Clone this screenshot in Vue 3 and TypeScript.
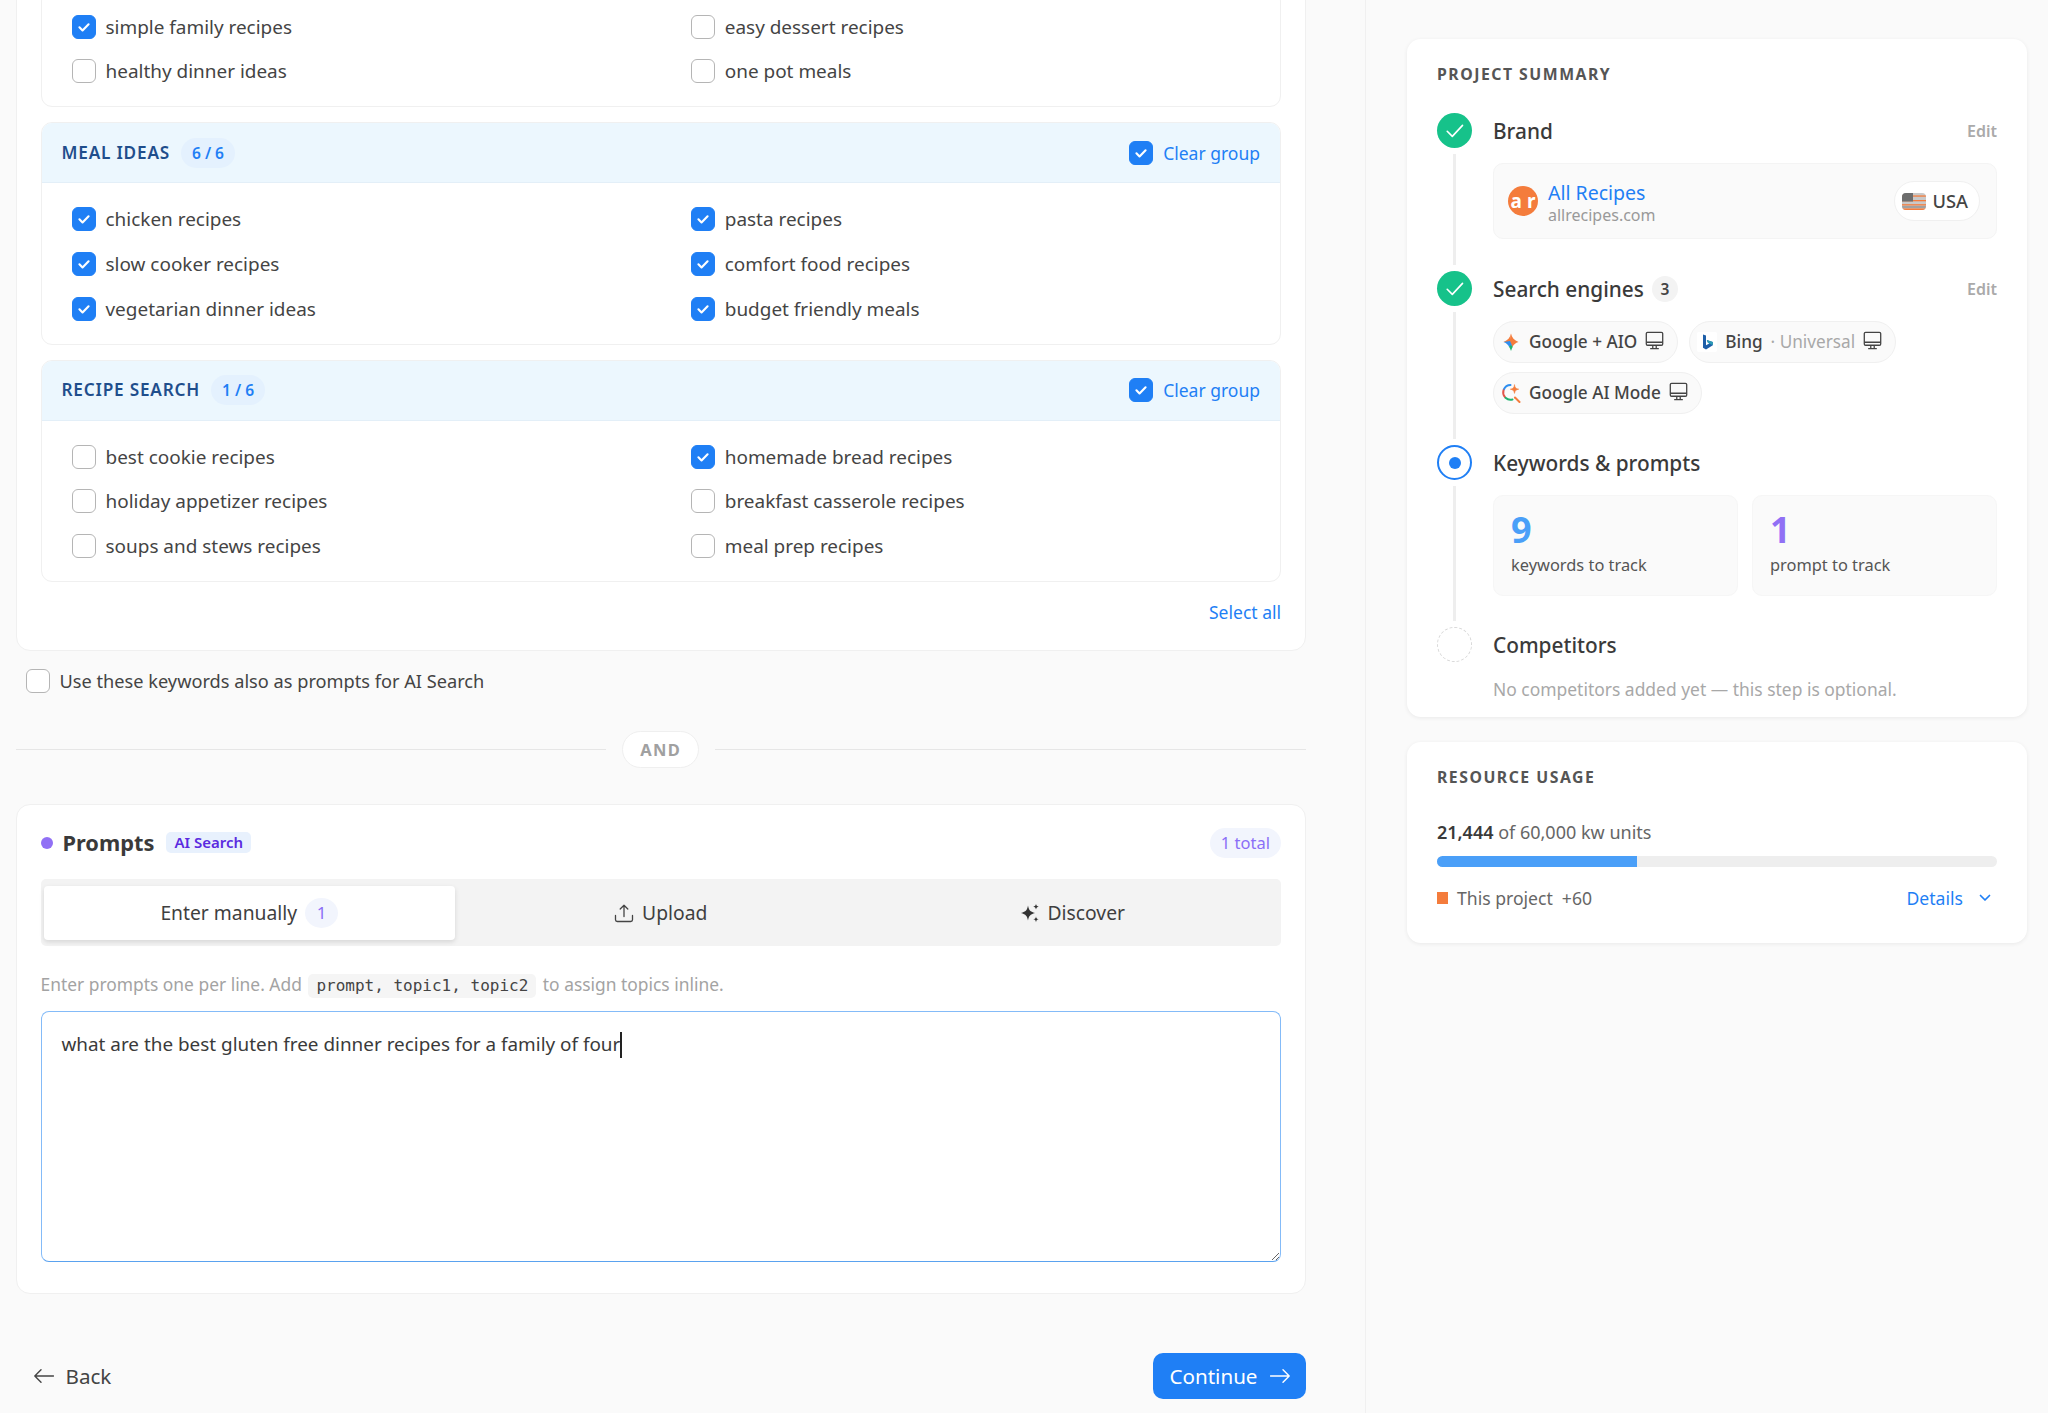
<script setup lang="ts">
interface Keyword {
  label: string
  checked: boolean
}

interface KeywordGroup {
  name: string
  count: string
  items: Keyword[]
}

function kw(label: string, checked = false): Keyword {
  return { label, checked }
}

const topItems: Keyword[] = [
  kw('simple family recipes', true),
  kw('easy dessert recipes'),
  kw('healthy dinner ideas'),
  kw('one pot meals'),
]

const groups: KeywordGroup[] = [
  {
    name: 'MEAL IDEAS',
    count: '6 / 6',
    items: [
      kw('chicken recipes', true),
      kw('pasta recipes', true),
      kw('slow cooker recipes', true),
      kw('comfort food recipes', true),
      kw('vegetarian dinner ideas', true),
      kw('budget friendly meals', true),
    ],
  },
  {
    name: 'RECIPE SEARCH',
    count: '1 / 6',
    items: [
      kw('best cookie recipes'),
      kw('homemade bread recipes', true),
      kw('holiday appetizer recipes'),
      kw('breakfast casserole recipes'),
      kw('soups and stews recipes'),
      kw('meal prep recipes'),
    ],
  },
]

const usedUnits = 21444
const totalUnits = 60000
const usedPercent = (usedUnits / totalUnits) * 100
</script>

<template>
  <div class="app">
    <main class="main">
      <section class="card keywords">
        <div class="group">
          <div class="group-body">
            <label v-for="item in topItems" :key="item.label" class="row">
              <span class="box" :class="{ on: item.checked }">
                <svg v-if="item.checked" viewBox="0 0 24 24"><path d="M7 12.4l3.4 3.4L17 9" /></svg>
              </span>
              <span>{{ item.label }}</span>
            </label>
          </div>
        </div>

        <div v-for="group in groups" :key="group.name" class="group">
          <div class="group-head">
            <span class="group-name">{{ group.name }}</span>
            <span class="group-count">{{ group.count }}</span>
            <span class="group-action">
              <span class="box on"><svg viewBox="0 0 24 24"><path d="M7 12.4l3.4 3.4L17 9" /></svg></span>
              <span>Clear group</span>
            </span>
          </div>
          <div class="group-body">
            <label v-for="item in group.items" :key="item.label" class="row">
              <span class="box" :class="{ on: item.checked }">
                <svg v-if="item.checked" viewBox="0 0 24 24"><path d="M7 12.4l3.4 3.4L17 9" /></svg>
              </span>
              <span>{{ item.label }}</span>
            </label>
          </div>
        </div>

        <div class="select-all">Select all</div>
      </section>

      <label class="row also">
        <span class="box"></span>
        <span>Use these keywords also as prompts for AI Search</span>
      </label>

      <div class="divider">
        <span class="divider-line"></span>
        <span class="divider-pill">AND</span>
        <span class="divider-line"></span>
      </div>

      <section class="card prompts">
        <div class="prompts-head">
          <span class="dot"></span>
          <span class="prompts-title">Prompts</span>
          <span class="ai-badge">AI Search</span>
          <span class="total">1 total</span>
        </div>

        <div class="tabs">
          <div class="tab active">
            <span>Enter manually</span>
            <span class="tab-count">1</span>
          </div>
          <div class="tab">
            <svg class="tab-icon" viewBox="0 0 20 20" fill="none" stroke="#444" stroke-width="1.3" stroke-linecap="round" stroke-linejoin="round">
              <path d="M10 13.5V2.2M6.2 6L10 2.2 13.8 6" />
              <path d="M1.5 12.5v4.2c0 1 .8 1.8 1.8 1.8h13.4c1 0 1.8-.8 1.8-1.8v-4.2" />
            </svg>
            <span>Upload</span>
          </div>
          <div class="tab">
            <svg class="tab-icon" viewBox="0 0 20 20" fill="#333">
              <path d="M8 2.500C8.800 7 10 8.500 15 10 10 11.500 8.800 13 8 17.500 7.200 13 6 11.500 1 10 6 8.500 7.200 7 8 2.500z" />
              <path d="M16 .8c.3 1.900 1 2.600 2.800 2.900-1.800.3-2.500 1-2.800 2.900-.3-1.900-1-2.600-2.800-2.900 1.800-.3 2.500-1 2.800-2.900z" />
              <path d="M16 13.400c.3 1.900 1 2.600 2.800 2.900-1.800.3-2.500 1-2.800 2.900-.3-1.900-1-2.600-2.800-2.900 1.800-.3 2.500-1 2.800-2.900z" />
            </svg>
            <span>Discover</span>
          </div>
        </div>

        <p class="hint">Enter prompts one per line. Add <code>prompt, topic1, topic2</code> to assign topics inline.</p>

        <div class="editor">what are the best gluten free dinner recipes for a family of four<span class="caret"></span></div>
      </section>

      <footer class="footer">
        <span class="back">
          <svg viewBox="0 0 20 20" fill="none" stroke="#444" stroke-width="1.4" stroke-linecap="round" stroke-linejoin="round">
            <path d="M19.500 10H.8M7 3.800L.8 10 7 16.200" />
          </svg>
          Back
        </span>
        <button class="continue">
          Continue
          <svg viewBox="0 0 20 20" fill="none" stroke="#fff" stroke-width="1.4" stroke-linecap="round" stroke-linejoin="round">
            <path d="M.5 10h18.700M13 3.800l6.200 6.200-6.200 6.200" />
          </svg>
        </button>
      </footer>
    </main>

    <aside class="side">
      <section class="panel summary">
        <h3 class="panel-title">PROJECT SUMMARY</h3>

        <div class="step brand-step">
          <div class="rail">
            <span class="node done">
              <svg viewBox="0 0 24 24"><path d="M7 12.500l3.500 3.500L17.500 8.500" /></svg>
            </span>
            <span class="rail-line"></span>
          </div>
          <div class="step-body">
            <div class="step-head">
              <span class="step-title">Brand</span>
              <span class="edit">Edit</span>
            </div>
            <div class="brand-box">
              <span class="brand-logo">a r</span>
              <div class="brand-text">
                <div class="brand-name">All Recipes</div>
                <div class="brand-url">allrecipes.com</div>
              </div>
              <span class="country">
                <svg class="flag" viewBox="0 0 24 17">
                  <defs>
                    <clipPath id="flag-clip"><rect width="24" height="17" rx="4" /></clipPath>
                  </defs>
                  <g clip-path="url(#flag-clip)">
                    <rect width="24" height="17" fill="#c9c9c9" />
                    <rect y="2.400" width="24" height="1.300" fill="#f47c3c" />
                    <rect y="7" width="24" height="1.300" fill="#f47c3c" />
                    <rect y="11.200" width="24" height="1.300" fill="#f47c3c" />
                    <rect y="15.400" width="24" height="1.600" fill="#f47c3c" />
                    <rect y="13.600" width="24" height=".8" fill="#666" />
                    <rect width="11" height="8.500" fill="#6d6d6d" />
                  </g>
                </svg>
                USA
              </span>
            </div>
          </div>
        </div>

        <div class="step engines-step">
          <div class="rail">
            <span class="node done">
              <svg viewBox="0 0 24 24"><path d="M7 12.500l3.500 3.500L17.500 8.500" /></svg>
            </span>
            <span class="rail-line"></span>
          </div>
          <div class="step-body">
            <div class="step-head">
              <span class="step-title">Search engines</span>
              <span class="step-count">3</span>
              <span class="edit">Edit</span>
            </div>
            <div class="chips">
              <span class="chip">
                <svg class="engine" viewBox="0 0 20 20">
                  <path d="M10 1.500c.7 4 3.400 7 7.500 8.500-3 .9-5 2.600-6 5L8.500 10z" fill="#f47c3c" />
                  <path d="M10 1.500C9.300 5.500 6.600 8.500 2.500 10L9 10.500z" fill="#f47c3c" />
                  <path d="M2.500 10c2.600.9 4.600 2.700 5.600 5L11 13.500 9 9z" fill="#2f8ff0" />
                  <path d="M8 14.800c.9 1.100 1.500 2.500 2 4.200.5-1.700 1.100-3.100 1.800-4.200L10 13z" fill="#1fb36f" />
                </svg>
                <span>Google + AIO</span>
                <svg class="device" viewBox="0 0 22 22" fill="none" stroke="#444" stroke-width="1.500">
                  <rect x="1.500" y="1.500" width="19" height="15" rx="1.500" />
                  <path d="M1.500 13h19M9 16.500v3.500M13 16.500v3.500M6 20.500h10" />
                </svg>
              </span>
              <span class="chip">
                <svg class="engine bing" viewBox="0 0 20 20">
                  <rect width="20" height="20" rx="2" fill="#fff" />
                  <path d="M6 2.500l3 1v9.800l3.300-1.900-1.500-.8-1-2.600 6 2v3.300L9 17.500l-3-1.700z" fill="#1d5ea8" />
                  <path d="M9.800 8l6 2v3.300l-3.500-1.900-1.500-.8z" fill="#2b9bb5" />
                </svg>
                <span>Bing</span>
                <span class="muted">· Universal</span>
                <svg class="device" viewBox="0 0 22 22" fill="none" stroke="#444" stroke-width="1.500">
                  <rect x="1.500" y="1.500" width="19" height="15" rx="1.500" />
                  <path d="M1.500 13h19M9 16.500v3.500M13 16.500v3.500M6 20.500h10" />
                </svg>
              </span>
              <span class="chip">
                <svg class="engine mode" viewBox="0 0 20 20" fill="none" stroke-width="2" stroke-linecap="round">
                  <path d="M9.500 2a7.500 7.500 0 0 0-6.700 4.500" stroke="#2f8ff0" />
                  <path d="M2.500 7.200a7.500 7.500 0 0 0 1.500 7" stroke="#e2554a" />
                  <path d="M4.500 14.800a7.500 7.500 0 0 0 7 1.700" stroke="#1fb36f" />
                  <path d="M14 14.500l4.500 4.500" stroke="#f47c3c" />
                  <path d="M13.500 2c.4 2.700 1.400 3.700 4.200 4.200-2.800.5-3.800 1.500-4.200 4.200-.4-2.700-1.400-3.700-4.200-4.200 2.800-.5 3.800-1.500 4.200-4.200z" fill="#f47c3c" stroke="#f47c3c" stroke-width=".6" />
                </svg>
                <span>Google AI Mode</span>
                <svg class="device" viewBox="0 0 22 22" fill="none" stroke="#444" stroke-width="1.500">
                  <rect x="1.500" y="1.500" width="19" height="15" rx="1.500" />
                  <path d="M1.500 13h19M9 16.500v3.500M13 16.500v3.500M6 20.500h10" />
                </svg>
              </span>
            </div>
          </div>
        </div>

        <div class="step keywords-step">
          <div class="rail">
            <span class="node current"><span class="node-dot"></span></span>
            <span class="rail-line"></span>
          </div>
          <div class="step-body">
            <div class="step-head">
              <span class="step-title">Keywords &amp; prompts</span>
            </div>
            <div class="stats">
              <div class="stat">
                <div class="stat-num blue">9</div>
                <div class="stat-label">keywords to track</div>
              </div>
              <div class="stat">
                <div class="stat-num purple">1</div>
                <div class="stat-label">prompt to track</div>
              </div>
            </div>
          </div>
        </div>

        <div class="step last-step">
          <div class="rail">
            <span class="node pending"></span>
          </div>
          <div class="step-body">
            <div class="step-head">
              <span class="step-title">Competitors</span>
            </div>
            <p class="step-note">No competitors added yet — this step is optional.</p>
          </div>
        </div>
      </section>

      <section class="panel usage">
        <h3 class="panel-title">RESOURCE USAGE</h3>
        <div class="usage-text"><strong>21,444</strong> of 60,000 kw units</div>
        <div class="bar">
          <div class="bar-fill" :style="{ width: usedPercent + '%' }"></div>
        </div>
        <div class="usage-foot">
          <span class="legend-mark"></span>
          <span class="legend-label">This project</span>
          <span class="legend-value">+60</span>
          <span class="details">
            Details
            <svg viewBox="0 0 12 8" fill="none" stroke="#1f7ff5" stroke-width="1.700" stroke-linecap="round" stroke-linejoin="round">
              <path d="M1.500 1.500L6 6l4.500-4.500" />
            </svg>
          </span>
        </div>
      </section>
    </aside>
  </div>
</template>

<style>
html,
body {
  background: #fafafa;
  overflow: hidden;
}
</style>

<style scoped>
.app {
  display: flex;
  height: 100vh;
  overflow: hidden;
  background: #fafafa;
  color: #444;
  font-family: 'Noto Sans', sans-serif;
  font-size: 18.95px;
  line-height: 24px;
}

.main {
  box-sizing: border-box;
  width: 1366px;
  flex: none;
  padding: 0 59px 0 15.5px;
  border-right: 1px solid #f0f0f0;
}

.card {
  background: #fff;
  border: 1px solid #f0f0f0;
  border-radius: 14px;
}

.keywords {
  margin-top: -26.3px;
  padding: 0 24px;
}

.group {
  margin-top: 15px;
  border: 1px solid #f0f0f0;
  border-radius: 11px;
  overflow: hidden;
}

.group-head {
  box-sizing: border-box;
  display: flex;
  align-items: center;
  height: 60px;
  padding: 0 20px;
  background: #ecf7fe;
  border-bottom: 1px solid #e3eff8;
}

.group-name {
  font-size: 17.200px;
  font-weight: 600;
  letter-spacing: 0.8px;
  color: #1f4e8c;
}

.group-count {
  margin-left: 11px;
  padding: 3px 11px;
  border-radius: 15px;
  background: #e4f1fe;
  color: #1f7ff5;
  font-size: 15.500px;
  font-weight: 600;
}

.group-action {
  margin-left: auto;
  display: flex;
  align-items: center;
  gap: 10px;
  color: #1f7ff5;
  font-size: 17.500px;
}

.group-body {
  display: grid;
  grid-template-columns: 1fr 1fr;
  column-gap: 60px;
  row-gap: 20.700px;
  padding: 24px 30px 23px;
}

.row {
  display: flex;
  align-items: center;
  gap: 10px;
}

.box {
  box-sizing: border-box;
  flex: none;
  width: 24px;
  height: 24px;
  border: 1.300px solid #b5b5b5;
  border-radius: 6px;
  background: #fff;
}

.box.on {
  background: #1f7ff5;
  border-color: #1f7ff5;
}

.box svg {
  display: block;
  width: 22px;
  height: 22px;
  fill: none;
  stroke: #fff;
  stroke-width: 2.300;
  stroke-linecap: round;
  stroke-linejoin: round;
}

.select-all {
  margin-top: 18px;
  padding-bottom: 25.500px;
  text-align: right;
  color: #1f7ff5;
  font-size: 17.500px;
}

.also {
  margin: 18.500px 0 0 10px;
  font-size: 18.200px;
}

.divider {
  display: flex;
  align-items: center;
  gap: 16px;
  margin-top: 37.500px;
}

.divider-line {
  flex: 1;
  height: 1px;
  background: #e6e6e6;
}

.divider-pill {
  box-sizing: border-box;
  height: 37px;
  padding: 0 17px;
  border: 1px solid #efefef;
  border-radius: 19px;
  background: #fff;
  color: #a0a0a0;
  font-size: 16.500px;
  font-weight: 700;
  letter-spacing: 1.300px;
  line-height: 35px;
}

.prompts {
  margin-top: 36px;
  padding: 0 24px 31px;
}

.prompts-head {
  display: flex;
  align-items: center;
  height: 30px;
  margin-top: 23px;
}

.dot {
  width: 12px;
  height: 12px;
  border-radius: 50%;
  background: #9170f5;
}

.prompts-title {
  margin-left: 10px;
  font-size: 21.800px;
  font-weight: 700;
  color: #3a3a3a;
}

.ai-badge {
  margin-left: 12px;
  padding: 0 8px;
  height: 21px;
  border-radius: 5px;
  background: #e8f1fd;
  color: #5b2be0;
  font-size: 15px;
  font-weight: 600;
  line-height: 21px;
}

.total {
  margin-left: auto;
  padding: 0 11px;
  height: 30px;
  border-radius: 15px;
  background: #f2f5fd;
  color: #8b6ff7;
  font-size: 16.500px;
  line-height: 30px;
}

.tabs {
  display: grid;
  grid-template-columns: repeat(3, 1fr);
  margin-top: 21px;
  padding: 7px 3px 6px;
  background: #f3f3f3;
  border-radius: 5px;
}

.tab {
  display: flex;
  align-items: center;
  justify-content: center;
  gap: 8px;
  height: 54px;
  color: #3f3f3f;
  font-size: 19.300px;
}

.tab.active {
  background: #fff;
  border-radius: 4px;
  box-shadow: 0 2px 5px rgba(0, 0, 0, 0.12);
}

.tab-count {
  width: 33px;
  height: 30px;
  border-radius: 50%;
  background: #f2f5fd;
  color: #8b6ff7;
  font-size: 17px;
  line-height: 30px;
  text-align: center;
}

.tab-icon {
  width: 20px;
  height: 20px;
  flex: none;
}

.hint {
  height: 24px;
  margin: 26px 0 0;
  color: #a3a3a3;
  font-size: 17.400px;
}

code {
  display: inline-block;
  margin: 0 2px;
  padding: 0 8px;
  border-radius: 5px;
  background: #f5f5f5;
  color: #444;
  font-family: 'DejaVu Sans Mono', monospace;
  font-size: 16px;
  line-height: 24px;
}

.editor {
  box-sizing: border-box;
  height: 251px;
  margin-top: 15px;
  padding: 20.500px 20px;
  border: 1.300px solid #84bbf8;
  border-bottom-color: #5aa2ef;
  border-radius: 8px;
  overflow: auto;
  resize: vertical;
  color: #3a3a3a;
  background: #fff;
  font-size: 18.900px;
}

.caret {
  display: inline-block;
  width: 1.500px;
  height: 26px;
  background: #222;
  vertical-align: -7px;
}

.footer {
  display: flex;
  align-items: center;
  justify-content: space-between;
  margin-top: 59px;
}

.back {
  display: flex;
  align-items: center;
  gap: 12px;
  padding-left: 18px;
  font-size: 20.600px;
}

.back svg,
.continue svg {
  width: 20px;
  height: 20px;
}

.continue {
  display: flex;
  align-items: center;
  gap: 12px;
  box-sizing: border-box;
  height: 46px;
  padding: 0 16.500px;
  border: none;
  border-radius: 10px;
  background: #1f7ff5;
  color: #fff;
  font-family: inherit;
  font-size: 20.600px;
}

.side {
  flex: 1;
  padding: 39px 21px 0 41px;
  min-width: 0;
}

.panel {
  background: #fff;
  border-radius: 14px;
  padding: 0 30px;
  box-shadow: 0 1px 4px rgba(0, 0, 0, 0.07);
}

.panel-title {
  margin: 0;
  font-size: 15.800px;
  font-weight: 700;
  letter-spacing: 1.500px;
  color: #555;
  line-height: 24px;
}

.summary {
  box-sizing: border-box;
  height: 678px;
  padding-top: 23px;
}

.step {
  display: flex;
  gap: 21px;
}

.brand-step {
  height: 158px;
  margin-top: 27px;
}

.engines-step {
  height: 174px;
}

.keywords-step {
  height: 182px;
}

.rail {
  display: flex;
  flex-direction: column;
  align-items: center;
  flex: none;
  width: 35px;
}

.node {
  box-sizing: border-box;
  flex: none;
  width: 35px;
  height: 35px;
  border-radius: 50%;
}

.node.done {
  background: #16c28a;
}

.node.done svg {
  display: block;
  width: 35px;
  height: 35px;
  fill: none;
  stroke: #fff;
  stroke-width: 1.100;
  stroke-linecap: round;
  stroke-linejoin: round;
}

.node.current {
  display: flex;
  align-items: center;
  justify-content: center;
  border: 2.400px solid #1f7ff5;
}

.node-dot {
  width: 12px;
  height: 12px;
  border-radius: 50%;
  background: #1f7ff5;
}

.node.pending {
  border: 1.800px dashed #d8d8d8;
}

.rail-line {
  flex: 1;
  width: 3px;
  margin: 6px 0;
  background: #eeeeee;
}

.step-body {
  flex: 1;
  min-width: 0;
}

.step-head {
  display: flex;
  align-items: center;
  height: 35px;
}

.step-title {
  font-size: 20.800px;
  font-weight: 500;
  color: #3a3a3a;
}

.step-count {
  margin-left: 8px;
  width: 26px;
  height: 26px;
  border-radius: 50%;
  background: #f3f3f3;
  text-align: center;
  font-size: 15.500px;
  font-weight: 600;
  line-height: 26px;
}

.edit {
  margin-left: auto;
  color: #aaa;
  font-size: 16px;
  font-weight: 600;
}

.brand-box {
  display: flex;
  align-items: center;
  box-sizing: border-box;
  height: 76px;
  margin-top: 15px;
  padding: 0 16px 0 14px;
  border: 1px solid #f4f4f4;
  border-radius: 10px;
  background: #fafafa;
}

.brand-logo {
  flex: none;
  width: 30px;
  height: 30px;
  border-radius: 50%;
  background: #f47c3c;
  color: #fff;
  font-size: 19px;
  font-weight: 700;
  line-height: 30px;
  text-align: center;
  white-space: pre;
  overflow: hidden;
}

.brand-text {
  margin-left: 10px;
  padding-top: 5px;
}

.brand-name {
  color: #1f7ff5;
  font-size: 19.500px;
  line-height: 23px;
}

.brand-url {
  color: #999;
  font-size: 16px;
  line-height: 22px;
}

.country {
  display: flex;
  align-items: center;
  gap: 6.500px;
  box-sizing: border-box;
  height: 40px;
  margin-left: auto;
  padding: 0 11px 0 7px;
  border: 1px solid #f0f0f0;
  border-radius: 20px;
  background: #fff;
  font-size: 18.300px;
  font-weight: 500;
}

.flag {
  width: 24px;
  height: 17px;
}

.chips {
  display: flex;
  flex-wrap: wrap;
  gap: 9px 11px;
  margin-top: 14.500px;
}

.chip {
  display: flex;
  align-items: center;
  gap: 8px;
  box-sizing: border-box;
  height: 42px;
  padding: 0 13px 0 7px;
  border: 1px solid #f0f0f0;
  border-radius: 21px;
  background: #fafafa;
  font-size: 17.200px;
  font-weight: 500;
}

.muted {
  color: #a8a8a8;
  font-weight: 400;
}

.engine {
  flex: none;
  width: 20px;
  height: 20px;
}

.device {
  flex: none;
  width: 19px;
  height: 19px;
  margin-top: -2px;
}

.stats {
  display: grid;
  grid-template-columns: 1fr 1fr;
  gap: 14px;
  margin-top: 15px;
}

.stat {
  box-sizing: border-box;
  height: 101px;
  padding: 15px 17px 0;
  border: 1px solid #f6f6f6;
  border-radius: 10px;
  background: #fafafa;
}

.stat-num {
  font-size: 36px;
  font-weight: 700;
  line-height: 38px;
}

.stat-num.blue {
  color: #4a9ff8;
}

.stat-num.purple {
  color: #9170f5;
}

.stat-label {
  margin-top: 4px;
  font-size: 16.400px;
  color: #555;
}

.step-note {
  margin: 15px 0 0;
  color: #a8a8a8;
  font-size: 17.450px;
}

.usage {
  box-sizing: border-box;
  height: 201px;
  margin-top: 25px;
  padding-top: 23px;
}

.usage-text {
  margin-top: 31px;
  font-size: 18px;
  color: #666;
}

.usage-text strong {
  font-weight: 600;
  color: #3a3a3a;
}

.bar {
  height: 11px;
  margin-top: 12px;
  border-radius: 6px;
  background: #eeeeee;
  overflow: hidden;
}

.bar-fill {
  height: 100%;
  background: #4a9ff8;
}

.usage-foot {
  display: flex;
  align-items: center;
  margin-top: 19px;
  font-size: 17.600px;
  color: #666;
}

.legend-mark {
  width: 11px;
  height: 12px;
  background: #f47c3c;
  margin-right: 9px;
}

.legend-value {
  margin-left: 9px;
}

.details {
  display: flex;
  align-items: center;
  gap: 16px;
  margin-left: auto;
  padding-right: 6px;
  color: #1f7ff5;
}

.details svg {
  width: 12px;
  height: 8px;
}
</style>
